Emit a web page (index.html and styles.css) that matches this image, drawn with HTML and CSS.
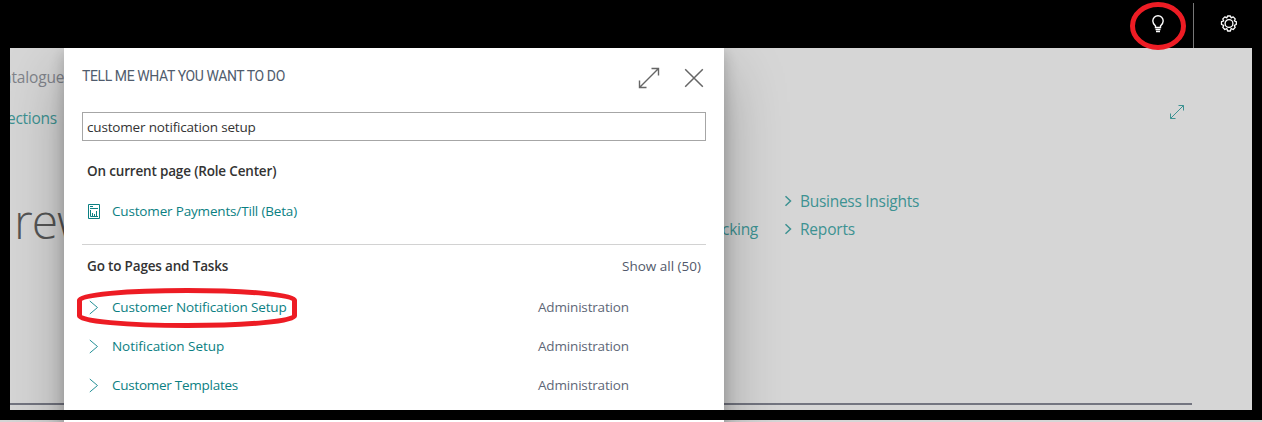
FILE: index.html
```html
<!DOCTYPE html>
<html lang="en">
<head>
<meta charset="utf-8">
<title>Tell me what you want to do</title>
<link rel="stylesheet" href="styles.css">
</head>
<body>
<div class="screen">
  <main class="page">
    <div class="crumb">atalogue</div>
    <div class="actions">
      <a class="link">ections</a>
      <svg class="page-expand" width="16" height="16" viewBox="0 0 16 16"><path d="M1.5 14.5 14.5 1.5M9.5 1.5h5v5M1.5 9.5v5h5"/></svg>
    </div>
    <div class="hero">
      <div class="headline">rew</div>
      <div class="tracking link">cking</div>
      <nav class="nav">
        <a class="link nav-item"><svg width="8" height="12" viewBox="0 0 8 12"><path d="M1.5 1.2 6.5 6l-5 4.8"/></svg><span>Business Insights</span></a>
        <a class="link nav-item"><svg width="8" height="12" viewBox="0 0 8 12"><path d="M1.5 1.2 6.5 6l-5 4.8"/></svg><span class="fit-reports">Reports</span></a>
      </nav>
    </div>
    <div class="rule"></div>
  </main>

  <section class="dialog">
    <header class="dialog-head">
      <h1>TELL ME WHAT YOU WANT TO DO</h1>
      <svg class="expand" width="22" height="22" viewBox="0 0 22 22"><path d="M1.5 20.5 20.5 1.5M13.5 1.5h7v7M1.5 13.5v7h7"/></svg>
      <svg class="close" width="20" height="20" viewBox="0 0 20 20"><path d="M1.2 1.2 18.8 18.8M18.8 1.2 1.2 18.8"/></svg>
    </header>
    <div class="search">customer notification setup</div>
    <h2 class="current">On current page (Role Center)</h2>
    <div class="row payments">
      <svg class="report" width="12" height="15" viewBox="0 0 12 15"><path d="M.5.5h11v14H.5z"/><path d="M2 2.5h3M2 4.5h8M2.5 6v6.5H10M4.500 9v3M6.500 10v2M8.500 7v5"/></svg>
      <a>Customer Payments/Till (Beta)</a>
    </div>
    <div class="group">
      <h2>Go to Pages and Tasks</h2>
      <span class="show">Show all (50)</span>
    </div>
    <div class="row result">
      <svg width="10" height="15" viewBox="0 0 10 15"><path d="M.8 1 8.500 7.500.8 14"/></svg>
      <a class="fit-main">Customer Notification Setup</a><span class="area">Administration</span>
    </div>
    <div class="row result">
      <svg width="10" height="15" viewBox="0 0 10 15"><path d="M.8 1 8.500 7.500.8 14"/></svg>
      <a class="fit-short">Notification Setup</a><span class="area">Administration</span>
    </div>
    <div class="row result">
      <svg width="10" height="15" viewBox="0 0 10 15"><path d="M.8 1 8.500 7.500.8 14"/></svg>
      <a class="fit-templates">Customer Templates</a><span class="area">Administration</span>
    </div>
  </section>

  <div class="frame"></div>
  <header class="topbar">
    <div class="bulb"><svg width="14" height="18" viewBox="0 0 14 18"><path d="M4.500 12.500V11C3 9.500 1.800 8.300 1.800 6a5.200 5.200 0 0 1 10.400 0c0 2.300-1.200 3.500-2.700 5v1.500zM4.500 14.500h5M5 16.500h4"/></svg></div>
    <div class="gear"><svg width="18" height="18" viewBox="0 0 18 18"><path d="M7.600 1h2.800l.7 1.800 2.100-.9 2 2-.9 2.100 2 .7v2.800l-2 .9.9 2-2 2.100-2.100-.9-.7 2.400H7.600l-.7-2.400-2.100.9-2-2.100.9-2-2.200-.9V6.700l2.200-.7-.9-2.100 2-2 2.100.9z"/><circle cx="9" cy="8.500" r="3.900"/></svg></div>
  </header>

  <svg class="mark mark-bulb" width="58" height="50" viewBox="0 0 58 50"><ellipse cx="29" cy="25" rx="25.500" ry="21.500"/></svg>
  <svg class="mark mark-result" width="222" height="42" viewBox="0 0 222 42"><path d="M3.500 13C3.500 8 50 3.500 111 3.500S218.500 8 218.500 13V29C218.500 34 172 38.500 111 38.500S3.500 34 3.500 29Z"/></svg>
</div>
</body>
</html>
```
FILE: styles.css
```css
* { box-sizing: border-box; }
body { margin: 0; font-family: "Open Sans", "Noto Sans", sans-serif; }
h1, h2 { margin: 0; }
svg { display: block; fill: none; stroke: currentColor; flex: none; }
.screen { position: relative; width: 1262px; height: 422px; overflow: hidden; background: #d6d6d6; white-space: nowrap; }

.topbar { position: absolute; inset: 0 0 auto; height: 48px; display: flex; justify-content: flex-end; color: #fff; }
.bulb { width: 73px; padding: 15px 0 0 30.5px; }
.gear { width: 69px; margin-top: 3px; height: 45px; border-left: 1px solid #777; padding: 12px 0 0 26px; }
.gear svg { stroke-width: 1.3; stroke-linejoin: round; }
.bulb svg { stroke-width: 1.4; }
.frame { position: absolute; inset: 0 0 2px; border: 10px solid #000; border-top-width: 48px; }

.page { padding-top: 66px; font-size: 15.5px; letter-spacing: -.28px; }
.link { color: #3d9292; }
.crumb { height: 22px; padding-left: 3px; line-height: 23px; letter-spacing: -.15px; color: #80838a; }
.actions { display: flex; justify-content: space-between; margin-top: 18px; padding: 0 77px 0 7px; height: 24px; line-height: 24px; }
.page-expand { margin-top: -2px; color: #3d9292; }
.hero { display: flex; height: 70px; margin-top: 57px; }
.headline { width: 690px; padding-left: 14px; font-size: 48px; font-weight: 300; line-height: 68px; letter-spacing: -1px; color: #555; }
.tracking { width: 68px; padding-top: 28px; line-height: 28px; text-align: right; }
.nav { padding: 0 0 0 26px; }
.nav-item { display: flex; align-items: center; height: 28px; gap: 8px; }
.nav-item svg { stroke-width: 1.5; }
.fit-reports { letter-spacing: -.2px; }
.rule { width: 1192px; height: 2px; margin-top: 146px; background: #737580; }

.dialog { position: absolute; left: 64px; top: 48px; width: 660px; height: 600px; padding: 0 18px; background: #fff; font-size: 13.5px; letter-spacing: -.17px; color: #52596a; box-shadow: 0 25px 58px rgba(0,0,0,.28), 0 5px 14px rgba(0,0,0,.22); }
.dialog-head { display: flex; height: 64px; padding-right: 2px; color: #666; }
.dialog-head h1 { flex: 1; padding-top: 18px; font: 400 14px/20px Roboto, sans-serif; letter-spacing: -.4px; color: #505c6d; }
.expand { margin: 19px 24px 0 0; stroke-width: 1.4; }
.close { margin-top: 20px; stroke-width: 1.5; }
.search { height: 29px; border: 1px solid #a6a6a6; padding-left: 4px; line-height: 28px; color: #333; }
.dialog h2 { font-size: 13.5px; font-weight: 600; color: #333; line-height: 20px; }
.dialog .current { margin: 20px 0 0 5px; }
.row { display: flex; align-items: center; height: 39px; padding-left: 5px; }
.row a { color: #0b8083; }
.payments { height: 40px; margin-top: 10px; margin-bottom: 13px; color: #0b8083; }
.report { margin: 0 12px 0 1px; }
.group { display: flex; justify-content: space-between; height: 43px; padding: 11px 5px 0; border-top: 1px solid #d2d2d2; line-height: 20px; }
.show { letter-spacing: 0; }
.result svg { margin: 1px 13px 0 2px; color: #259197; }
.result a { width: 426px; }
.result .fit-main { letter-spacing: -.13px; }
.result .fit-short { letter-spacing: -.04px; }
.result .fit-templates { letter-spacing: -.27px; }
.area { color: #5e6777; }

.mark { position: absolute; stroke: #ed1c24; stroke-width: 5; }
.mark-bulb { left: 1129px; top: 1px; }
.mark-result { left: 76px; top: 287px; }
```
